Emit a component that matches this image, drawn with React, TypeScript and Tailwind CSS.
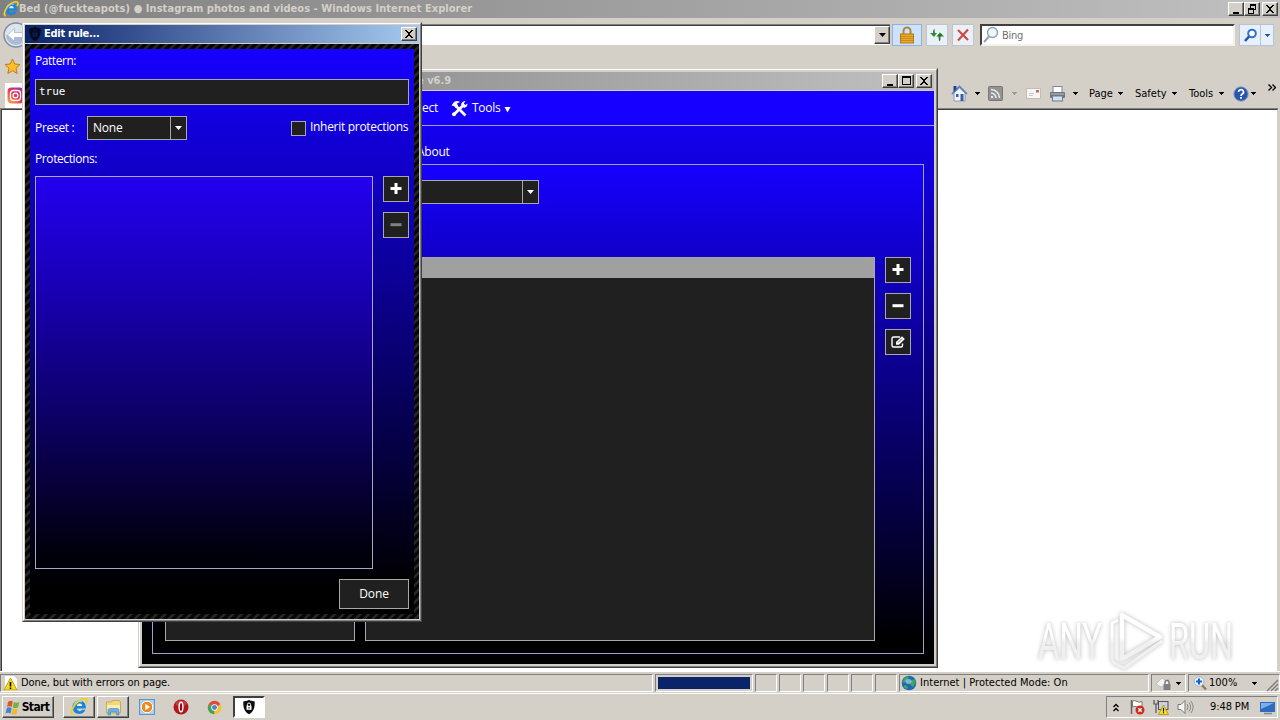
import type { ReactNode } from "react";
import clsx from "clsx";

// ─────────────────────────────────────────────
// SMALL PARTS
// ─────────────────────────────────────────────

function Arrow({ className = "text-black" }: { className?: string }) {
  return (
    <svg width="5" height="3" viewBox="0 0 5 3" shapeRendering="crispEdges" className={clsx("shrink-0", className)}>
      <path d="M0 0h5v1h-1v1h-1v1h-1v-1h-1v-1h-1z" fill="currentColor" />
    </svg>
  );
}

function BigArrow({ className = "text-white" }: { className?: string }) {
  return (
    <svg width="7" height="4" viewBox="0 0 7 4" className={clsx("shrink-0", className)}>
      <path d="M0 0h7L3.5 4z" fill="currentColor" />
    </svg>
  );
}

function IeIcon({ size = 16 }: { size?: number }) {
  return (
    <svg width={size} height={size} viewBox="0 0 16 16" className="shrink-0">
      <path d="M14 9.400H6.200a2.400 2.400 0 0 0 4.500 1h3A6 6 0 1 1 14 9.400z" fill="#1d84dc" />
      <path d="M6.200 7.200h4.600a2.300 2.300 0 0 0-4.600 0z" fill="#e8f4ff" />
      <path d="M3.600 6a5.400 5.400 0 0 1 7-2.600" stroke="#8dd0fa" strokeWidth="1.300" fill="none" />
      <path d="M2.600 15C-1 12.800 4.600 2.800 11.400 1 15.600 0 15.600 2.600 14 5" stroke="#f0cf2a" strokeWidth="1.700" fill="none" />
    </svg>
  );
}

function ShieldIcon({ fill, keyhole }: { fill: string; keyhole: string }) {
  return (
    <svg width="16" height="16" viewBox="0 0 16 16" className="shrink-0">
      <path d="M8 .8c1.600 1.200 3.600 1.600 5.600 1.400.5 6-.8 10.400-5.600 13C3.200 12.600 1.900 8.200 2.400 2.200 4.400 2.400 6.400 2 8 .8z" fill={fill} />
      <rect x="5.500" y="6.800" width="5" height="4" fill={keyhole} />
      <path d="M6.400 7V5.600a1.600 1.600 0 0 1 3.200 0V7" stroke={keyhole} fill="none" />
      <rect x="7.500" y="8" width="1" height="1.600" fill={fill} />
    </svg>
  );
}

function GlobeIcon() {
  return (
    <svg width="16" height="16" viewBox="0 0 16 16" className="shrink-0">
      <circle cx="8" cy="8" r="7.300" fill="#2465b5" />
      <path d="M3 3.500c2-2 4-2.300 5-1.800 0 1.800-2 2.300-2.500 4S2.500 8 1.500 7.500zM9 6l4.500-2 1 4-2.500 4-2.500-2zM3 10l4 1.500-1 3-3-2z" fill="#38ad55" />
      <ellipse cx="7.500" cy="6.500" rx="3" ry="2.400" fill="#b9e4ff" opacity=".6" />
    </svg>
  );
}

const captionGlyphs: Record<string, ReactNode> = {
  min: <path d="M3 9h6v2H3z" />,
  max: <path d="M2 1h9v9H2zM3 3v6h7V3z" fillRule="evenodd" />,
  restore: <path d="M4 1h6v6H8v4H2V5h2zM5 3v2h3v1h1V3zM3 7v3h4V7z" fillRule="evenodd" />,
  close: (
    <path d="M2 2h2v1h1v1h2V3h1V2h2v1H9v1H8v1H7v2h1v1h1v1h1v1H8V9H7V8H5v1H4v1H2V9h1V8h1V7h1V5H4V4H3V3H2z" />
  ),
};

function CaptionButton({ kind }: { kind: "min" | "max" | "restore" | "close" }) {
  return (
    <div className="flex h-[14px] w-4 justify-center border border-t-white border-l-white border-r-[#404040] border-b-[#404040] bg-[#d4d0c8] shadow-[inset_-1px_-1px_0_#808080]">
      <svg width="12" height="12" viewBox="0 0 12 12" shapeRendering="crispEdges" className="shrink-0">
        {captionGlyphs[kind]}
      </svg>
    </div>
  );
}

function DarkButton({ kind, disabled = false }: { kind: "plus" | "minus" | "edit"; disabled?: boolean }) {
  return (
    <div className="flex size-[26px] items-center justify-center border border-[#a8a8a8] bg-[#202020] pr-px">
      <svg width="14" height="14" viewBox="0 0 14 14" className={disabled ? "text-[#808080]" : "text-white"}>
        {kind === "plus" && <path d="M5.500 1h3v4h4v3h-4v4h-3V8h-4V5h4z" fill="currentColor" />}
        {kind === "minus" && <path d="M1.500 5.200h11v3h-11z" fill="currentColor" />}
        {kind === "edit" && (
          <>
            <path d="M9 2H2.500A1.500 1.500 0 0 0 1 3.500v7A1.500 1.500 0 0 0 2.500 12H10a1.500 1.500 0 0 0 1.500-1.500V8.500" stroke="currentColor" strokeWidth="1.400" fill="none" />
            <path d="M5 7l6-5.800L13.800 4 8 9.800H5z" fill="currentColor" />
            <path d="M7 7.600l4-4" stroke="#202020" strokeWidth=".7" />
          </>
        )}
      </svg>
    </div>
  );
}

// ─────────────────────────────────────────────
// BROWSER
// ─────────────────────────────────────────────

function BrowserTitle() {
  return (
    <div className="flex h-[18px] items-center bg-[linear-gradient(90deg,#808080,#c0c0c0)] pr-[2px] pl-[3px]">
      <IeIcon />
      <span className="text-[11px] font-bold tracking-[0.055px] whitespace-nowrap text-[#d4d0c8]">
        Bed (@fuckteapots) ● Instagram photos and videos - Windows Internet Explorer
      </span>
      <div className="ml-auto flex">
        <CaptionButton kind="min" />
        <CaptionButton kind="restore" />
        <div className="w-[2px]" />
        <CaptionButton kind="close" />
      </div>
    </div>
  );
}

function AddressRow() {
  return (
    <div className="flex h-[34px] items-start pt-[6px] pr-[6px] pl-[3px]">
      <svg width="26" height="26" viewBox="0 0 26 26" className="-mt-[2px] shrink-0">
        <circle cx="13" cy="13" r="12" fill="#dce4ee" stroke="#7f8ea3" strokeWidth="1.500" />
        <path d="M3 13a10 10 0 0 0 20 0z" fill="#a9bdd6" />
        <path d="M4.500 13l7-6.500v4H21v5h-9.500v4z" fill="#fff" stroke="#90a4bd" strokeWidth=".6" />
      </svg>
      <div className="ml-[23px] h-[21px] flex-1 border-t border-b border-t-[#808080] border-b-white">
        <div className="flex h-[19px] justify-end border-t border-t-[#404040] bg-white">
          <div className="flex h-[18px] w-4 items-center justify-center border border-t-white border-l-white border-r-[#404040] border-b-[#404040] bg-[#d4d0c8] shadow-[inset_-1px_-1px_0_#808080]">
            <BigArrow className="text-black" />
          </div>
        </div>
      </div>
      <div className="ml-[2px] flex h-[22px] w-[30px] items-center justify-center border border-[#8db2e3] bg-[#cfe2fb]">
        <svg width="16" height="18" viewBox="0 0 16 18">
          <path d="M4.500 8V5a3.500 3.500 0 0 1 7 0v3" stroke="#a88a3a" strokeWidth="2" fill="none" />
          <rect x="1.500" y="8" width="13" height="9" fill="#e9a92b" stroke="#b27a12" />
          <path d="M2 10.500h12M2 12.500h12M2 14.500h12" stroke="#c58414" strokeWidth=".8" />
        </svg>
      </div>
      <div className="ml-1 flex h-[22px] w-[22px] items-center justify-center border border-[#b9c6d8] bg-[#eaf0f6]">
        <svg width="16" height="16" viewBox="0 0 16 16" className="shrink-0">
          <path d="M5.500 1.500q-2 1.500-1.500 4.500H1l4 4 3-4H6q-.5-3-.500-4.500z" fill="#34893c" />
          <path d="M10 14.500q2-1.500 1.500-5H15L11 5.500 7.500 9.500h2q.5 3.500.500 5z" fill="#1e7a28" />
        </svg>
      </div>
      <div className="ml-1 flex h-[22px] w-[22px] items-center justify-center border border-[#b9c6d8] bg-[#eaf0f6]">
        <svg width="14" height="14" viewBox="0 0 14 14">
          <path d="M2 2l10 10M12 1.500L2 12.500" stroke="#cf4a45" strokeWidth="2.200" />
        </svg>
      </div>
      <div className="ml-[6px] flex h-[22px] w-[255px] items-center border-2 border-t-[#404040] border-r-[#f3f1ee] border-b-[#f3f1ee] border-l-[#404040] bg-white">
        <svg width="18" height="18" viewBox="0 0 18 18">
          <circle cx="10.500" cy="6.500" r="5" fill="#eef6fd" stroke="#8fa3b8" strokeWidth="1.400" />
          <path d="M7 10.500L2 16" stroke="#8fa3b8" strokeWidth="2" />
        </svg>
        <span className="mt-[2px] ml-[2px] text-[11px] tracking-[-0.3px] text-[#707070]">Bing</span>
      </div>
      <div className="ml-1 flex h-[22px] w-[35px] border border-[#b3c4de] bg-[#e8f0fa]">
        <div className="flex w-[21px] items-center justify-center border-r border-[#b3c4de]">
          <svg width="15" height="15" viewBox="0 0 15 15">
            <circle cx="9" cy="5.500" r="3.800" fill="#fff" stroke="#2f6fd0" strokeWidth="2" />
            <path d="M6 8.500L2 13" stroke="#2256b5" strokeWidth="2.600" />
          </svg>
        </div>
        <div className="flex flex-1 items-center justify-center">
          <Arrow className="text-[#1d5bb5]" />
        </div>
      </div>
    </div>
  );
}

function CommandBar() {
  return (
    <div className="flex h-[29px] items-center text-[11px] text-black">
      <svg width="17" height="17" viewBox="0 0 17 17" className="shrink-0">
        <path d="M3 8v8h11V8L8.500 3z" fill="#f1f5fa" stroke="#8b9cb3" />
        <path d="M1 9l7.500-7.500L16 9" stroke="#5a80bb" strokeWidth="1.600" fill="none" />
        <path d="M2.500 1h3v3l-3 3z" fill="#263e9a" />
        <rect x="9.500" y="9" width="3" height="7" fill="#35619d" />
        <rect x="5" y="9" width="2.500" height="3" fill="#35619d" />
      </svg>
      <Arrow className="ml-[7px]" />
      <svg width="15" height="15" viewBox="0 0 15 15" className="ml-2 shrink-0">
        <rect x=".5" y=".5" width="14" height="14" rx="1" fill="#929292" stroke="#777" />
        <path d="M3 3.500a8.500 8.500 0 0 1 8.500 8.500M3 7a5 5 0 0 1 5 5" stroke="#eee" strokeWidth="1.500" fill="none" />
        <circle cx="4" cy="11" r="1.200" fill="#eee" />
      </svg>
      <Arrow className="ml-[9px] text-[#9c9890]" />
      <svg width="15" height="11" viewBox="0 0 15 11" className="ml-[9px] shrink-0">
        <rect x=".5" y=".5" width="14" height="10" fill="#f8f6f4" stroke="#c3bdb5" />
        <path d="M3 5.500h5M3 7.500h4" stroke="#bbb" strokeWidth=".8" />
        <rect x="10" y="2" width="3" height="2.500" fill="#d4645a" />
      </svg>
      <svg width="17" height="16" viewBox="0 0 17 16" className="ml-2 shrink-0">
        <rect x="4" y=".5" width="9" height="6" fill="#fff" stroke="#7e8792" />
        <rect x="1" y="6" width="15" height="6" rx="1" fill="#6d7580" />
        <path d="M2 8h13" stroke="#b8c1cb" />
        <rect x="3.500" y="10" width="10" height="5" fill="#cfe0f2" stroke="#6f7c8b" />
      </svg>
      <Arrow className="ml-[7px]" />
      <span className="mt-[2px] ml-[11px] w-[29px]">Page</span>
      <Arrow />
      <span className="mt-[2px] ml-[12px] w-[37px]">Safety</span>
      <Arrow />
      <span className="mt-[2px] ml-[12px] w-[30px]">Tools</span>
      <Arrow />
      <svg width="16" height="16" viewBox="0 0 16 16" className="ml-[9px] shrink-0">
        <circle cx="8" cy="8" r="7.200" fill="#2a55ad" stroke="#8aa0c8" />
        <path d="M5.500 6a2.500 2.300 0 1 1 3.700 2Q8 8.700 8 10" stroke="#fff" strokeWidth="1.700" fill="none" />
        <rect x="7.100" y="11" width="1.800" height="1.800" fill="#fff" />
      </svg>
      <Arrow className="ml-[2px]" />
      <svg width="8" height="7" viewBox="0 0 8 7" className="-mt-[13px] ml-3 shrink-0">
        <path d="M.5.500l3 3-3 3M4.500.5l3 3-3 3" stroke="#000" strokeWidth="1.400" fill="none" />
      </svg>
    </div>
  );
}

function ToolRows() {
  return (
    <div className="flex h-14">
      <div className="flex w-[951px] flex-col">
        <div className="h-[31px] pt-[6px] pl-1">
          <svg width="17" height="17" viewBox="0 0 17 17">
            <path d="M8.500 1l2.200 5 5.300.5-4 3.700 1.200 5.300-4.700-2.800-4.700 2.800L5 10.200 1 6.500 6.300 6z" fill="#fbbf2d" stroke="#c47d12" />
          </svg>
        </div>
        <div className="ml-[5px] flex h-[25px] w-[160px] items-center bg-white pl-[2px]">
          <svg width="17" height="17" viewBox="0 0 17 17">
            <defs>
              <linearGradient id="insta" x1="0" y1="1" x2="1" y2="0">
                <stop offset="0" stopColor="#fdb34a" />
                <stop offset=".5" stopColor="#e4324e" />
                <stop offset="1" stopColor="#8a35c4" />
              </linearGradient>
            </defs>
            <rect x=".5" y=".5" width="16" height="16" rx="4" fill="url(#insta)" />
            <rect x="3.500" y="3.500" width="10" height="10" rx="3" stroke="#fff" strokeWidth="1.300" fill="none" />
            <circle cx="8.500" cy="8.500" r="2.400" stroke="#fff" strokeWidth="1.300" fill="none" />
          </svg>
        </div>
      </div>
      <div className="pt-[27px]">
        <CommandBar />
      </div>
    </div>
  );
}

function StatusCell({ className, children }: { className: string; children?: ReactNode }) {
  return (
    <div
      className={clsx(
        "flex h-[18px] shrink-0 items-center border border-t-[#808080] border-r-white border-b-white border-l-[#808080]",
        className
      )}
    >
      {children}
    </div>
  );
}

function StatusBar() {
  return (
    <div className="flex h-[22px] items-start gap-[2px] overflow-hidden border-t border-white bg-[#d4d0c8] pt-[2px] text-[11px] text-black">
      <StatusCell className="w-[653px] pl-[2px]">
        <svg width="15" height="15" viewBox="0 0 15 15" className="shrink-0">
          <path d="M2 0h9l3 3v12H2z" fill="#fff" />
          <path d="M7.500 2l6.500 12H1z" fill="#f7dd1c" stroke="#b9a110" />
          <path d="M6.700 6h1.600v4.500H6.700zM6.700 11.500h1.600V13H6.700z" fill="#000" />
        </svg>
        <span className="mt-px ml-[3px] tracking-[-0.08px]">Done, but with errors on page.</span>
      </StatusCell>
      <StatusCell className="w-[98px] px-[2px]">
        <div className="h-3 w-[92px] bg-[#0a246a]" />
      </StatusCell>
      {[0, 1, 2, 3, 4, 5].map((i) => (
        <StatusCell key={i} className="w-[22px]" />
      ))}
      <StatusCell className="w-[250px] pl-[1px]">
        <GlobeIcon />
        <span className="mt-px ml-[3px] tracking-[0.03px]">Internet | Protected Mode: On</span>
      </StatusCell>
      <StatusCell className="w-[35px] pl-1">
        <svg width="16" height="15" viewBox="0 0 16 15" className="shrink-0">
          <path d="M0 8l6-6 3 2 4-1v5l-8 3z" fill="#f2f2f2" stroke="#aaa" strokeWidth=".6" />
          <path d="M9 8V6.500a2 2 0 0 1 4 0V8" stroke="#777" strokeWidth="1.300" fill="none" />
          <rect x="7.500" y="8" width="7" height="6" fill="#808080" />
        </svg>
        <Arrow className="ml-[4px]" />
      </StatusCell>
      <StatusCell className="w-[92px] pl-1">
        <svg width="15" height="15" viewBox="0 0 15 15" className="shrink-0">
          <path d="M8 8l5 5.500" stroke="#97774d" strokeWidth="2.400" />
          <circle cx="6" cy="5.500" r="4.800" fill="#eaf4ff" stroke="#9ab5d6" />
          <path d="M6 2.500v6M3 5.500h6" stroke="#1c5fc0" strokeWidth="2" />
        </svg>
        <span className="mt-px ml-[1px] w-[43px]">100%</span>
        <Arrow />
        <svg width="13" height="14" viewBox="0 0 13 14" className="mt-1 ml-[9px]">
          <path d="M1 13L12 2M5 13l7-7M9 13l3-3" stroke="#808080" strokeWidth="1.500" />
        </svg>
      </StatusCell>
    </div>
  );
}

// ─────────────────────────────────────────────
// TASKBAR
// ─────────────────────────────────────────────

function TaskButton({ className, children }: { className?: string; children: ReactNode }) {
  return (
    <div
      className={clsx(
        "flex h-[22px] items-center justify-center border border-t-white border-l-white border-r-[#404040] border-b-[#404040] shadow-[inset_-1px_-1px_0_#808080]",
        className
      )}
    >
      {children}
    </div>
  );
}

function Taskbar() {
  return (
    <div className="flex h-[27px] items-start border-t border-white bg-[#d4d0c8] pt-[2px] pr-[2px] pl-[2px] text-[11px] text-black">
      <TaskButton className="w-[52px] pr-[2px]">
        <svg width="16" height="15" viewBox="0 0 16 15" className="shrink-0">
          <path d="M3 2q2.500-2 4.800-.5L6.800 7Q4.500 5.500 2 7z" fill="#e2562e" />
          <path d="M8.800 2Q11 3.500 14.500 2L13 7.500q-3 1.300-5.200 0z" fill="#74b33f" />
          <path d="M1.800 8q2.500-1.500 4.800 0l-1 5.500Q3 12 .5 13.500z" fill="#3e83d8" />
          <path d="M7.600 8.500q2.200 1.500 5.200.3L11.500 14q-3 1.300-5 0z" fill="#f3b92c" />
        </svg>
        <span className="ml-[1px] text-[12px] font-bold tracking-[-0.6px]">Start</span>
      </TaskButton>
      <TaskButton className="ml-[9px] w-8">
        <IeIcon size={18} />
      </TaskButton>
      <TaskButton className="ml-[2px] w-8">
        <svg width="17" height="17" viewBox="0 0 17 17">
          <path d="M1.500 3h5l1-1.500h7L15.500 3v11h-14z" fill="#f3d778" stroke="#cfa950" />
          <path d="M2 6h13v7H2z" fill="#fbeeb0" />
          <path d="M3 16v-4.500q0-2 2-2h7q2 0 2 2V16h-2.500v-3h-6v3z" fill="#67b1e4" stroke="#3e86bb" strokeWidth=".6" />
        </svg>
      </TaskButton>
      <div className="ml-[10px] flex h-[22px] w-4 items-center">
        <svg width="16" height="16" viewBox="0 0 16 16">
          <rect x=".5" y=".5" width="15" height="15" fill="#a9d1f2" stroke="#5a96cb" />
          <circle cx="8" cy="8" r="5.800" fill="#f08a1d" stroke="#fff" />
          <path d="M6.300 4.700L11 8l-4.700 3.300z" fill="#fff" />
        </svg>
      </div>
      <div className="ml-[18px] flex h-[22px] w-4 items-center">
        <svg width="16" height="16" viewBox="0 0 16 16">
          <circle cx="8" cy="8" r="7.500" fill="#b3161b" />
          <ellipse cx="8" cy="4.500" rx="5.500" ry="3" fill="#dc5357" opacity=".6" />
          <ellipse cx="8" cy="8" rx="1.900" ry="4.800" fill="#8b0d11" stroke="#fff" strokeWidth="1.400" />
        </svg>
      </div>
      <div className="ml-[18px] flex h-[22px] w-4 items-center">
        <svg width="15" height="15" viewBox="0 0 16 16">
          <circle cx="8" cy="8" r="7.200" fill="#f2c230" />
          <path d="M8 8L1.800 4.400a7.200 7.200 0 0 1 12.400 0z" fill="#dd4b3e" />
          <path d="M8 8L1.800 4.400A7.200 7.200 0 0 0 7.600 15.200z" fill="#3fa657" />
          <circle cx="8" cy="8" r="3.400" fill="#fff" />
          <circle cx="8" cy="8" r="2.600" fill="#4a83d8" />
        </svg>
      </div>
      <div className="ml-[10px] flex h-[22px] w-8 items-center justify-center border-2 border-t-[#404040] border-r-white border-b-white border-l-[#404040] bg-white">
        <ShieldIcon fill="#0c0c0c" keyhole="#fff" />
      </div>
      <div className="ml-auto flex h-[22px] w-[172px] items-center border border-t-[#808080] border-r-white border-b-white border-l-[#808080] pl-[6px]">
        <svg width="6" height="9" viewBox="0 0 6 9">
          <path d="M.5 4L3 1.500 5.500 4M.5 8L3 5.500 5.500 8" stroke="#000" strokeWidth="1.300" fill="none" />
        </svg>
        <svg width="16" height="16" viewBox="0 0 16 16" className="ml-[10px]">
          <path d="M2.500 1v14" stroke="#666" strokeWidth="1.500" />
          <path d="M3.500 2q2.500-1 4.500.5t5 0v6q-3 1-5-.5t-4.500 0z" fill="#fff" stroke="#777" />
          <circle cx="11" cy="11" r="4.500" fill="#d5281f" />
          <path d="M9.300 9.300l3.400 3.400M12.700 9.300l-3.400 3.400" stroke="#fff" strokeWidth="1.300" />
        </svg>
        <svg width="16" height="16" viewBox="0 0 16 16" className="ml-2">
          <path d="M1 1v4h4V1M3 5v9" stroke="#555" strokeWidth="1.200" fill="none" />
          <rect x="5.500" y="2.500" width="9.500" height="8" fill="#c8d0d8" stroke="#555" />
          <path d="M10.500 6l5 9.500h-10z" fill="#f5d91d" stroke="#a08a10" strokeWidth=".7" />
          <path d="M10 9h1v3.500h-1zM10 13.300h1v1h-1z" fill="#000" />
        </svg>
        <svg width="17" height="16" viewBox="0 0 17 16" className="ml-2">
          <path d="M1 5.500h3l4-4v13l-4-4H1z" fill="#f5f5f5" stroke="#777" />
          <path d="M10 5q2 3 0 6M12 3.500q3.200 4.500 0 9M14 2q4.200 6 0 12" stroke="#8a8a8a" fill="none" />
        </svg>
        <span className="mt-px ml-[16px] w-[50px] tracking-[-0.1px] whitespace-nowrap">9:48 PM</span>
        <svg width="15" height="14" viewBox="0 0 15 14" className="mt-[2px] shrink-0">
          <path d="M0 1h15v10H0z" fill="#2f6cbd" />
          <path d="M1 2h13L1 8z" fill="#79b1ea" />
          <path d="M4 12.500h8" stroke="#7a8896" strokeWidth="1.500" />
        </svg>
      </div>
    </div>
  );
}

function Browser() {
  return (
    <div className="flex h-[720px] flex-col bg-[#d4d0c8]">
      <BrowserTitle />
      <AddressRow />
      <ToolRows />
      <div className="mr-[2px] flex flex-1 border-t border-l border-[#808080]">
        <div className="flex-1 border-t border-r border-l border-t-[#404040] border-r-[#d4d0c8] border-l-[#404040] bg-white" />
      </div>
      <StatusBar />
      <Taskbar />
    </div>
  );
}

// ─────────────────────────────────────────────
// MAIN APP WINDOW
// ─────────────────────────────────────────────

function AppWindow() {
  return (
    <div className="absolute top-[68px] left-[138px] h-[600px] w-[800px] border border-t-[#d4d0c8] border-r-[#404040] border-b-[#404040] border-l-[#d4d0c8]">
      <div className="flex h-full flex-col border border-t-white border-r-[#808080] border-b-[#808080] border-l-white bg-[#d4d0c8] p-[2px]">
        <div className="flex h-[18px] shrink-0 items-center bg-[linear-gradient(90deg,#808080,#c0c0c0)] pr-[2px] pl-[275px]">
          <span className="mt-px text-[11px] font-bold text-[#d4d0c8]">e v6.9</span>
          <div className="ml-auto flex">
            <CaptionButton kind="min" />
            <CaptionButton kind="max" />
            <div className="w-[2px]" />
            <CaptionButton kind="close" />
          </div>
        </div>
        <div className="mt-px flex min-h-0 flex-1 flex-col bg-[linear-gradient(180deg,#1600ff,#1200e0_12%,#0e00b0_30%,#000_97%)] font-['Open_Sans',sans-serif] text-[12px] tracking-[-0.25px] text-white">
          <div className="flex h-[35px] shrink-0 items-center border-b border-[#a0a0c8] bg-[#1600ff] pl-[242px]">
            <span className="flex w-[54px] justify-end">Project</span>
            <svg width="17" height="17" viewBox="0 0 17 17" className="ml-[13px]">
              <path d="M5 6l9.500 9.500" stroke="#fff" strokeWidth="2.600" />
              <path d="M.5 5.500L3 2q3-2 6 0L6 3.500 7 6 4.500 8 3 6z" fill="#fff" />
              <path d="M2.500 15L12 5.500" stroke="#fff" strokeWidth="2.800" />
              <path d="M10 4.500Q11 1 14.500 1L12.800 3.500l1.500 1.500 2.200-1.500q.2 3.500-3.500 4.500z" fill="#fff" />
              <circle cx="3" cy="14.300" r="2" fill="#fff" />
            </svg>
            <span className="ml-[4px] w-[29px]">Tools</span>
            <svg width="7" height="6" viewBox="0 0 7 6" className="mt-1 ml-[3px]">
              <path d="M.5 0h6l-3 5.500z" fill="#fff" />
            </svg>
          </div>
          <div className="flex h-[38px] shrink-0 items-center pt-[14px] pl-[275px]">About</div>
          <div className="mr-[10px] mb-[10px] ml-[10px] flex min-h-0 flex-1 flex-col border border-[#a0a0c8] bg-[linear-gradient(180deg,#1600ff,#1100d0_16%,#0d00a5_32%,#000_97%)] pr-3 pb-3 pl-3">
            <div className="mt-[15px] ml-[170px] flex h-6 w-[204px] border border-[#a8a8a8] bg-[#202020]">
              <div className="ml-auto flex w-4 items-center justify-center border-l border-[#a8a8a8]">
                <BigArrow />
              </div>
            </div>
            <div className="mt-[53px] flex flex-1 gap-[10px]">
              <div className="w-[190px] border border-[#a8a8a8] bg-[#202020]" />
              <div className="w-[510px] border border-[#a8a8a8] bg-[#202020]">
                <div className="h-5 bg-[#a0a0a0]" />
              </div>
              <div className="flex flex-col gap-[10px]">
                <DarkButton kind="plus" />
                <DarkButton kind="minus" />
                <DarkButton kind="edit" />
              </div>
            </div>
          </div>
        </div>
      </div>
    </div>
  );
}

// ─────────────────────────────────────────────
// EDIT RULE DIALOG
// ─────────────────────────────────────────────

function EditRuleDialog() {
  return (
    <div className="absolute top-[22px] left-[22px] h-[600px] w-[400px] border border-t-[#d4d0c8] border-r-[#404040] border-b-[#404040] border-l-[#d4d0c8]">
      <div className="flex h-full flex-col border border-t-white border-r-[#808080] border-b-[#808080] border-l-white bg-[#d4d0c8] p-px">
        <div className="flex h-[18px] shrink-0 items-center bg-[linear-gradient(90deg,#0a246a,#a6caf0)] pr-[2px] pl-[2px]">
          <ShieldIcon fill="#050a1c" keyhole="#0a1c50" />
          <span className="ml-[1px] text-[11px] font-bold tracking-[-0.27px] text-white">Edit rule...</span>
          <div className="ml-auto">
            <CaptionButton kind="close" />
          </div>
        </div>
        <div className="mt-px min-h-0 flex-1 bg-[repeating-linear-gradient(135deg,#060606_0px,#060606_2.5px,#272727_3.500px,#272727_5px,#060606_6px)] p-[5px]">
          <div className="flex h-full flex-col bg-[linear-gradient(180deg,#1600ff,#1100d0_18%,#0c0098_40%,#000_95%)] p-[5px] font-['Open_Sans',sans-serif] text-[12px] leading-4 tracking-[-0.3px] text-white">
            <span className="-mt-px h-4 tracking-[-0.45px]">Pattern:</span>
            <div className="mt-[10px] flex h-[26px] items-center border border-[#a8a8a8] bg-[#202020] pl-[3px] font-['DejaVu_Sans_Mono',monospace] text-[11px] tracking-normal">
              true
            </div>
            <div className="mt-[11px] flex h-6 items-center">
              <span className="w-[52px]">Preset :</span>
              <div className="flex h-6 w-[100px] items-center border border-[#a8a8a8] bg-[#202020] pl-[5px] tracking-[-0.2px]">
                None
                <div className="ml-auto flex h-full w-4 items-center justify-center border-l border-[#a8a8a8]">
                  <BigArrow />
                </div>
              </div>
              <div className="ml-auto flex items-center gap-1">
                <div className="size-[15px] border border-[#a8a8a8] bg-[#202020]" />
                <span className="-mt-[2px] w-[99px] whitespace-nowrap">Inherit protections</span>
              </div>
            </div>
            <span className="mt-[11px] h-4 tracking-[-0.4px]">Protections:</span>
            <div className="mt-[9px] flex h-[393px] justify-between">
              <div className="w-[338px] border border-[#a8a8c0] bg-[linear-gradient(180deg,#2400f0,#1800b0_30%,#0d0068_60%,#00000a_97%)]" />
              <div className="flex flex-col gap-[10px]">
                <DarkButton kind="plus" />
                <DarkButton kind="minus" disabled />
              </div>
            </div>
            <div className="mt-[10px] flex h-[30px] w-[70px] items-center justify-center self-end border border-[#a8a8a8] bg-[#202020] tracking-[-0.1px]">
              Done
            </div>
          </div>
        </div>
      </div>
    </div>
  );
}

function Watermark() {
  return (
    <svg
      width="210"
      height="72"
      viewBox="0 0 210 72"
      className="absolute top-[603px] left-[1033px] font-['Roboto',sans-serif] text-[50px] drop-shadow-[0_0_2px_rgba(0,0,0,0.28)]"
    >
      <defs>
        <linearGradient id="fade" gradientUnits="userSpaceOnUse" x1="0" y1="34" x2="0" y2="40">
          <stop offset="0" stopColor="#fff" />
          <stop offset="1" stopColor="#f0f0f0" />
        </linearGradient>
      </defs>
      <g fill="url(#fade)">
        <text x="5" y="56" textLength="64" lengthAdjust="spacingAndGlyphs">ANY</text>
        <text x="136" y="56" textLength="64" lengthAdjust="spacingAndGlyphs">RUN</text>
      </g>
      <g fill="none" stroke="url(#fade)" strokeLinejoin="round">
        <path d="M89 12l38 22L89 56z" strokeWidth="4.500" />
        <path d="M85 17l-6 3v35q0 4 4 6l8 4 38-27" strokeWidth="3" />
      </g>
    </svg>
  );
}

export default function App() {
  return (
    <div className="relative h-[720px] w-[1280px] overflow-hidden font-['DejaVu_Sans_Condensed','DejaVu_Sans',sans-serif]">
      <Browser />
      <AppWindow />
      <EditRuleDialog />
      <Watermark />
    </div>
  );
}
